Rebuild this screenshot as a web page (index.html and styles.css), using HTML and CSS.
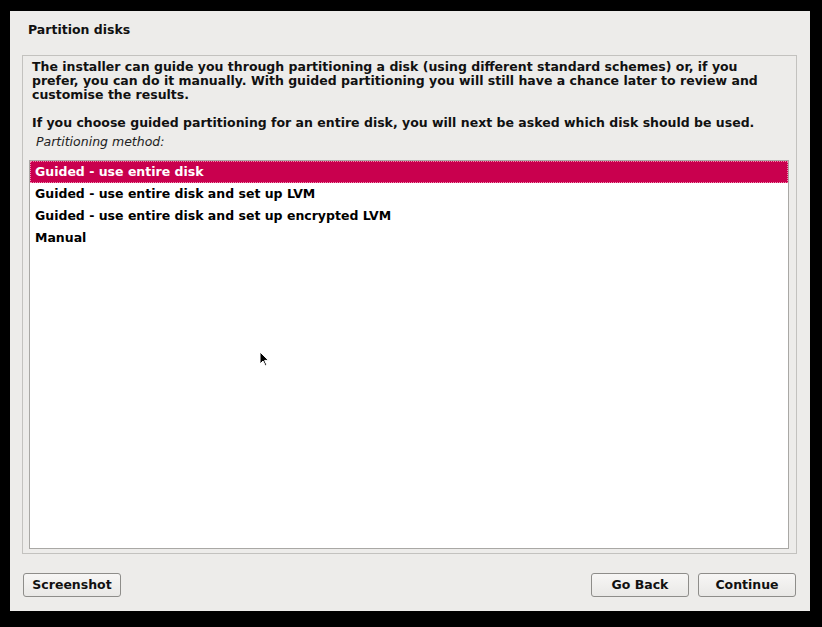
FILE: index.html
```html
<!DOCTYPE html>
<html>
<head>
<meta charset="utf-8">
<link rel="stylesheet" href="styles.css">
</head>
<body>
<div class="window">
  <div class="header">Partition disks</div>
  <div class="panel">
    <p class="para">The installer can guide you through partitioning a disk (using different standard schemes) or, if you prefer, you can do it manually. With guided partitioning you will still have a chance later to review and customise the results.</p>
    <p class="para">If you choose guided partitioning for an entire disk, you will next be asked which disk should be used.</p>
    <div class="label">Partitioning method:</div>
    <div class="list">
      <div class="row selected">Guided - use entire disk</div>
      <div class="row">Guided - use entire disk and set up LVM</div>
      <div class="row">Guided - use entire disk and set up encrypted LVM</div>
      <div class="row">Manual</div>
    </div>
  </div>
  <div class="footer">
    <button class="btn">Screenshot</button>
    <div class="spacer"></div>
    <button class="btn">Go Back</button>
    <button class="btn">Continue</button>
  </div>
</div>
<svg class="cursor" width="12" height="18" viewBox="0 0 12 18">
  <path d="M1 1 L1 13 L4 10 L6.5 15 L8 14.3 L5.6 9.4 L9.5 9.4 Z" fill="#000" stroke="#fff" stroke-width="1"/>
</svg>
</body>
</html>
```
FILE: styles.css
```css
html, body {
  margin: 0;
  padding: 0;
  background: #000;
  width: 822px;
  height: 627px;
  overflow: hidden;
  font-family: "DejaVu Sans", "Liberation Sans", sans-serif;
}
.window {
  position: relative;
  margin: 11px 0 0 10px;
  width: 800px;
  height: 600px;
  background: #edecea;
  display: flex;
  flex-direction: column;
  color: #111;
}
.header {
  height: 44px;
  box-sizing: border-box;
  padding: 11px 0 0 18px;
  font-size: 12.5px;
  font-weight: bold;
  line-height: 16px;
}
.panel {
  margin: 0 13px 0 12px;
  height: 499px;
  box-sizing: border-box;
  border: 1px solid #c3c2bf;
  padding: 4px 7px 4px 6px;
  display: flex;
  flex-direction: column;
}
.para {
  margin: 0 17px 14px 3px;
  font-size: 12.5px;
  font-weight: bold;
  line-height: 14px;
}
.para + .para { margin-bottom: 0; }
.label {
  margin: 5px 0 0 7px;
  font-size: 12.5px;
  font-style: italic;
  line-height: 14px;
  color: #222;
}
.list {
  margin-top: 11px;
  flex: 1;
  background: #fff;
  border: 1px solid #a9a8a5;
  margin-bottom: 0;
}
.row {
  height: 22px;
  line-height: 21px;
  padding-left: 5px;
  font-size: 12.5px;
  font-weight: bold;
  color: #000;
}
.row.selected {
  background: #c9004e;
  color: #fff;
  outline: 1px dotted #f38ab0;
  outline-offset: -1px;
}
.footer {
  flex: 1;
  display: flex;
  align-items: flex-start;
  padding: 19px 14px 0 13px;
  gap: 9px;
}
.spacer { flex: 1; }
.btn {
  width: 98px;
  height: 24px;
  border: 1px solid #8e8d8a;
  border-radius: 3px;
  background: linear-gradient(#f7f6f5, #e9e8e6);
  font-family: "DejaVu Sans", "Liberation Sans", sans-serif;
  font-size: 12.5px;
  font-weight: bold;
  color: #111;
  padding: 0;
  line-height: 22px;
}
.cursor {
  position: absolute;
  left: 259px;
  top: 351px;
}
```
